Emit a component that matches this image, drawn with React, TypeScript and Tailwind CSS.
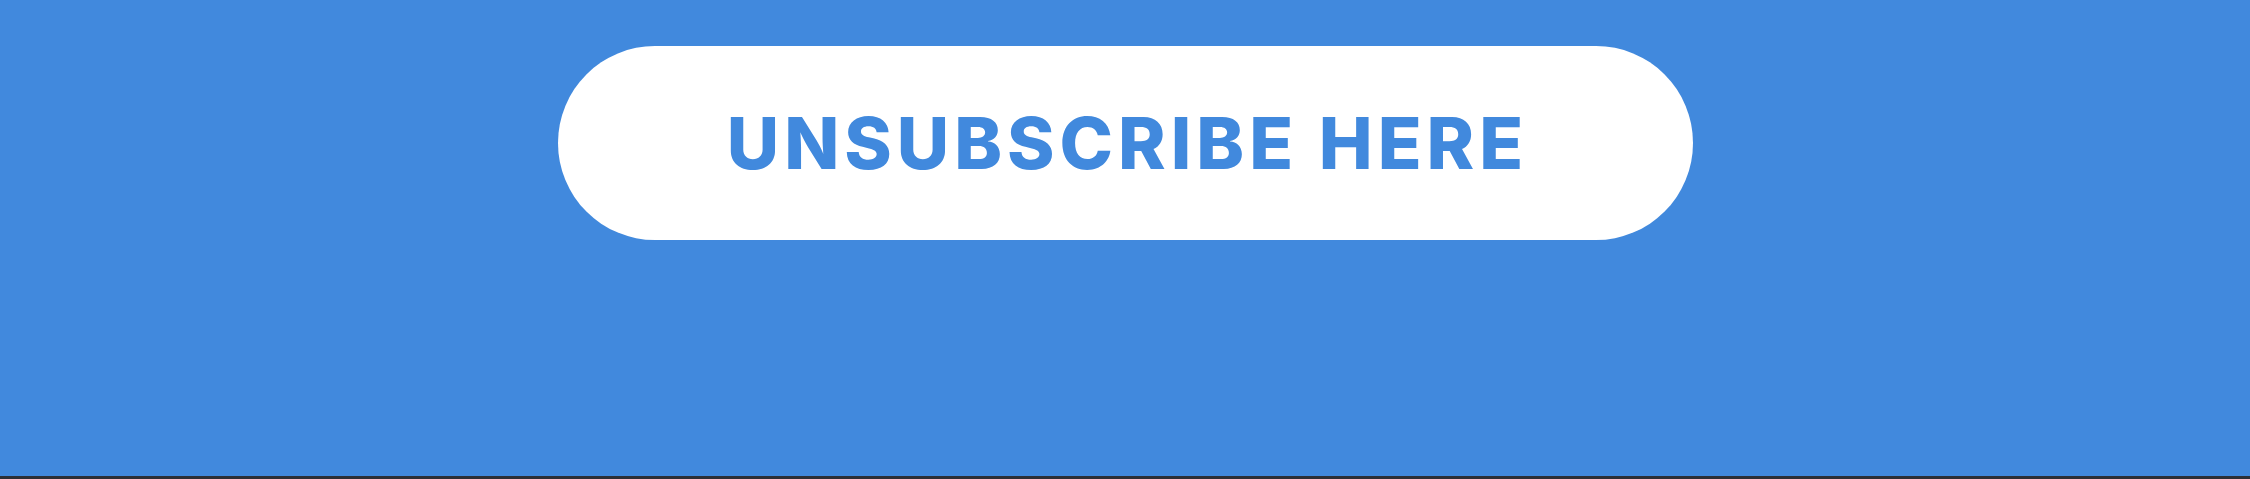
export default function App() {
  return (
    <div className="h-[479px] w-full bg-[#4189dd] border-b-[3px] border-[#2b2f36] pt-[46px]">
      <a
        href="#"
        className="mx-auto flex h-[194px] w-[1135px] items-center justify-center rounded-full bg-white"
      >
        <span className="pl-[5px] text-[72px] font-extrabold uppercase leading-none tracking-[5px] text-[#4189dd] [font-family:Inter,'Noto_Sans',sans-serif]">
          Unsubscribe here
        </span>
      </a>
    </div>
  );
}
